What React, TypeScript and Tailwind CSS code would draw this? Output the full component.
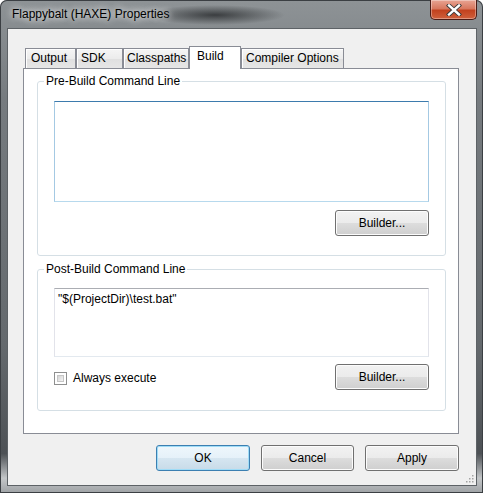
import { useState } from "react";

const tabs = [
  { label: "Output", width: "w-[51px]", pad: "pl-[5px]" },
  { label: "SDK", width: "w-[47px]", pad: "pl-[4px]" },
  { label: "Classpaths", width: "w-[66px]", pad: "pl-[3px]" },
  { label: "Build", width: "w-[52px]", pad: "pl-[7px]" },
  { label: "Compiler Options", width: "w-[103px]", pad: "pl-[4px]" },
];

function WinButton({ label, isDefault, width }: { label: string; isDefault?: boolean; width: string }) {
  return (
    <button
      type="button"
      className={`${width} h-[26px] rounded-[3px] border text-[12px] leading-[15px] text-black ${
        isDefault
          ? "border-[#3c7fb1] shadow-[inset_0_0_0_1px_#9fdcf7] bg-[linear-gradient(180deg,#eef7fc_0%,#e5f1f9_50%,#d6e6f1_50%,#c8dbe8_100%)]"
          : "border-[#707070] shadow-[inset_0_0_0_1px_#fcfcfc] bg-[linear-gradient(180deg,#f2f2f2_0%,#ebebeb_50%,#dddddd_50%,#cfcfcf_100%)]"
      }`}
    >
      {label}
    </button>
  );
}

function CloseButton() {
  return (
    <div className="flex h-[20px] w-[47px] items-center justify-center rounded-b-[5px] border border-t-0 border-[#4b1c16] bg-[linear-gradient(180deg,#e8a493_0%,#d8785f_45%,#c2421f_55%,#d0603c_100%)] shadow-[inset_0_0_0_1px_rgba(255,255,255,0.35)]">
      <svg width="16" height="12" viewBox="0 0 16 12">
        <path d="M3 1.5 L13 10.5 M13 1.5 L3 10.5" stroke="#3a3a3a" strokeWidth="4.2" strokeLinecap="square" />
        <path d="M3 1.5 L13 10.5 M13 1.5 L3 10.5" stroke="#ffffff" strokeWidth="2.4" strokeLinecap="square" />
      </svg>
    </div>
  );
}

function Checkbox({ checked, onToggle }: { checked: boolean; onToggle: () => void }) {
  return (
    <div
      onClick={onToggle}
      className="flex h-[13px] w-[13px] items-center justify-center border border-[#8e8f8f] bg-white p-[2px]"
    >
      <div className="h-full w-full border border-[#c6c6c6] bg-[linear-gradient(135deg,#d4d4d4_0%,#f4f4f4_100%)]">
        {checked && <span className="block text-[9px] leading-[7px]">✓</span>}
      </div>
    </div>
  );
}

export default function App() {
  const [always, setAlways] = useState(false);

  return (
    <div className="flex h-[493px] w-[483px] flex-col overflow-hidden rounded-t-[7px] bg-[linear-gradient(180deg,#8e9396_0%,#767b7f_20%,#64696d_70%,#4d5155_92%,#c3c6c8_97%,#9ea2a5_100%)] font-['Liberation_Sans',Arial,sans-serif] text-[12px] leading-[15px] text-black shadow-[inset_0_0_0_1px_#3b3f43]">
      {/* Title bar */}
      <div className="flex h-[28px] items-start justify-between bg-[radial-gradient(ellipse_70px_10px_at_215px_15px,rgba(25,27,29,0.7),transparent)] pl-[12px] pr-[6px]">
        <span className="pt-[7px] [text-shadow:0_0_6px_rgba(255,255,255,0.9),0_0_10px_rgba(255,255,255,0.7)]">
          Flappybalt (HAXE) Properties
        </span>
        <CloseButton />
      </div>

      {/* Client area */}
      <div className="relative ml-[7px] mr-[6px] flex h-[458px] flex-col border border-[#5d6266] bg-[#f0f0f0] pl-[15px] pr-[16px] pt-[17px]">
        {/* Tabs */}
        <div className="relative z-10 -mb-px ml-[2px] flex h-[23px] items-end">
          {tabs.map((t) =>
            t.label === "Build" ? (
              <div
                key={t.label}
                className={`${t.width} ${t.pad} h-[23px] whitespace-nowrap border-x border-t border-[#898c95] bg-white pt-[2px]`}
              >
                {t.label}
              </div>
            ) : (
              <div
                key={t.label}
                className={`${t.width} ${t.pad} mb-px flex h-[20px] items-center overflow-hidden whitespace-nowrap border-x border-t border-[#898c95] bg-[linear-gradient(180deg,#f5f5f5_0%,#ececec_50%,#e0e0e0_55%,#e6e6e6_100%)] shadow-[inset_1px_1px_0_#ffffff]`}
              >
                {t.label}
              </div>
            )
          )}
        </div>

        {/* Tab panel */}
        <div className="flex h-[366px] w-[436px] flex-col border border-[#898c95] bg-white pl-[13px] pr-[12px] pt-[5px]">
          <fieldset className="rounded-[3px] border border-[#d5dfe5] px-[16px] pb-[19px] pt-[12px]">
            <legend className="ml-[-10px] px-[2px]">Pre-Build Command Line</legend>
            <textarea
              readOnly
              className="block h-[101px] w-full resize-none border border-[#a4c9e3] border-b-[#b7d9ed] border-t-[#3d7bad] bg-white px-[3px] pt-[3px] outline-none"
            />
            <div className="mt-[8px] flex justify-end">
              <WinButton label="Builder..." width="w-[94px]" />
            </div>
          </fieldset>

          <fieldset className="mt-[6px] rounded-[3px] border border-[#d5dfe5] px-[16px] pb-[20px] pt-[11px]">
            <legend className="ml-[-10px] px-[2px]">Post-Build Command Line</legend>
            <textarea
              readOnly
              value={'"$(ProjectDir)\\test.bat"'}
              className="block h-[69px] w-full resize-none border border-[#e2e3ea] border-b-[#e3e9ef] border-t-[#abadb3] bg-white px-[3px] pt-[3px] leading-[15px] outline-none"
            />
            <div className="mt-[7px] flex items-start justify-between">
              <label className="mt-[7px] flex h-[15px] items-center gap-[6px]">
                <Checkbox checked={always} onToggle={() => setAlways(!always)} />
                <span>Always execute</span>
              </label>
              <WinButton label="Builder..." width="w-[94px]" />
            </div>
          </fieldset>
        </div>

        {/* Dialog buttons */}
        <div className="mt-[11px] flex justify-end gap-[11px] pr-[1px]">
          <WinButton label="OK" isDefault width="w-[94px]" />
          <WinButton label="Cancel" width="w-[93px]" />
          <WinButton label="Apply" width="w-[94px]" />
        </div>

        {/* Resize grip */}
        <svg className="absolute bottom-[2px] right-[2px]" width="9" height="9" viewBox="0 0 9 9">
          {[
            [7, 1],
            [4, 4],
            [7, 4],
            [1, 7],
            [4, 7],
            [7, 7],
          ].map(([x, y]) => (
            <rect key={`${x}-${y}`} x={x} y={y} width="1.5" height="1.5" fill="#a3a3a3" />
          ))}
        </svg>
      </div>
    </div>
  );
}
